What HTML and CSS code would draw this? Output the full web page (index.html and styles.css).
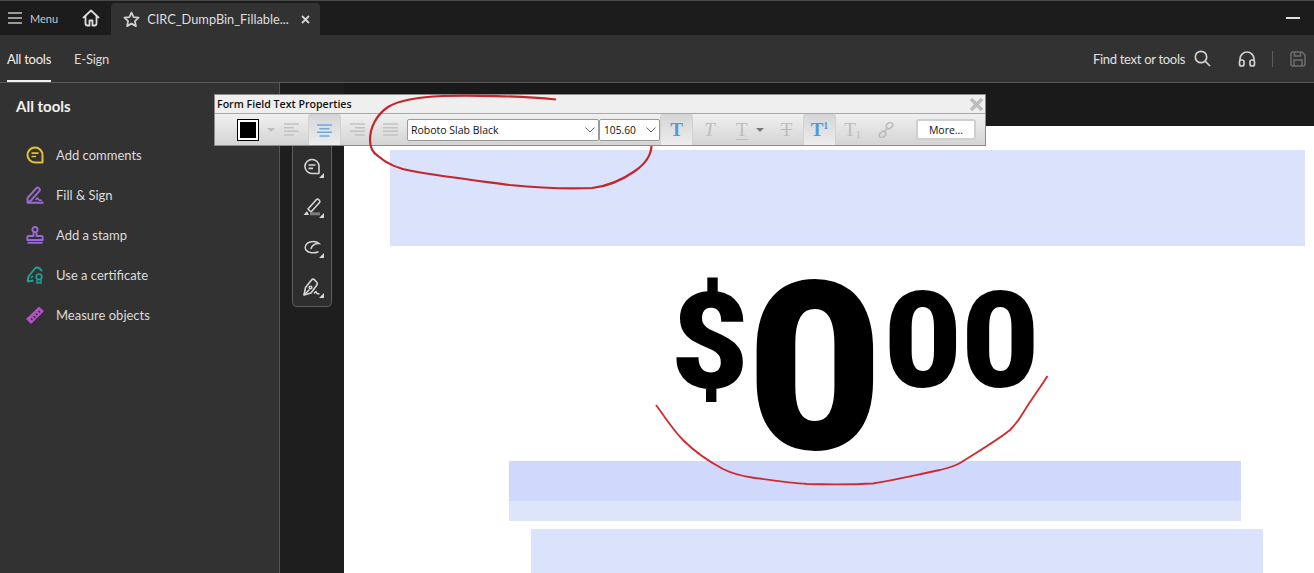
FILE: index.html
```html
<!DOCTYPE html>
<html lang="en">
<head>
  <meta charset="UTF-8">
  <meta name="viewport" content="width=device-width, initial-scale=1.0">
  <title>CIRC_DumpBin_Fillable</title>
  <link rel="stylesheet" href="styles.css">
</head>
<body>
  <div class="app">
    <div class="tabbar">
      <svg class="burger" width="14" height="12" viewBox="0 0 14 12"><path d="M0 1h14M0 6h14M0 11h14" stroke="#c4c4c4" stroke-width="1.5"/></svg>
      <span class="menu-label">Menu</span>
      <svg class="home" width="18" height="18" viewBox="0 0 18 18" fill="none" stroke="#dcdcdc" stroke-width="1.8" stroke-linejoin="round"><path d="M1 9l8-7.500L17 9M3.500 7v7.500a2 2 0 0 0 2 2h2v-5h3v5h2a2 2 0 0 0 2-2V7"/></svg>
      <div class="tab">
        <svg width="17" height="17" viewBox="0 0 17 17" fill="none" stroke="#d0d0d0" stroke-width="1.8" stroke-linejoin="round"><path d="M8.5 1.500l2.100 4.600 5 .6-3.700 3.400 1 5-4.400-2.500-4.400 2.500 1-5L1.400 6.700l5-.6z"/></svg>
        <span class="tab-title">CIRC_DumpBin_Fillable...</span>
        <svg class="tab-close" width="9" height="9" viewBox="0 0 9 9"><path d="M1 1l7 7M8 1l-7 7" stroke="#d4d4d4" stroke-width="1.8"/></svg>
      </div>
      <div class="minimize"></div>
    </div>

    <div class="toolbar">
      <a class="nav-item active">All tools</a>
      <a class="nav-item">E-Sign</a>
      <span class="find">Find text or tools</span>
      <svg class="search" width="17" height="17" viewBox="0 0 17 17" fill="none" stroke="#d0d0d0" stroke-width="1.7"><circle cx="7" cy="7" r="5.700"/><path d="M11 11l5 5"/></svg>
      <svg class="headset" width="18" height="17" viewBox="0 0 18 17" fill="none" stroke="#d0d0d0" stroke-width="1.7"><path d="M2 11V9a7 7 0 0 1 14 0v2"/><rect x="1.500" y="10" width="4.500" height="6" rx="2"/><rect x="12" y="10" width="4.500" height="6" rx="2"/></svg>
      <span class="divider"></span>
      <svg class="save" width="16" height="16" viewBox="0 0 16 16" fill="none" stroke="#6e6e6e" stroke-width="1.500"><path d="M1 3a2 2 0 0 1 2-2h9l3 3v9a2 2 0 0 1-2 2H3a2 2 0 0 1-2-2z"/><path d="M4.500 1v4h6V1M4 15V9h8v6"/></svg>
    </div>

    <div class="workspace">
      <aside class="sidebar">
        <h2>All tools</h2>
        <ul class="tools">
          <li>
            <svg width="18" height="18" viewBox="0 0 18 18" fill="none" stroke="#e2c130" stroke-width="2"><path d="M9 1.500a7.500 7.500 0 0 0 0 15h7.500V9A7.500 7.500 0 0 0 9 1.500z" stroke-linejoin="round"/><path d="M5.500 7.200h7M5.500 10.500h4.500" stroke-width="1.700"/></svg>
            Add comments
          </li>
          <li>
            <svg width="18" height="18" viewBox="0 0 18 18" fill="none" stroke="#9a6ad6" stroke-width="1.900" stroke-linejoin="round"><path d="M1.500 16.500V12L10.500 2a1.500 1.500 0 0 1 2.200 0l.8.800a1.500 1.500 0 0 1 0 2.100L5 14.500l-3.500 2zM1.500 16.800h16"/><path d="M9.500 14l2-2 1.500 2 3 .5" stroke-width="1.500"/></svg>
            Fill &amp; Sign
          </li>
          <li>
            <svg width="18" height="18" viewBox="0 0 18 18" fill="none" stroke="#9a6ad6" stroke-width="1.900" stroke-linejoin="round"><circle cx="9" cy="3.600" r="2.600"/><path d="M7.500 6.500v3.500H2.500a1.200 1.200 0 0 0-1.200 1.200V14h15.400v-2.800a1.200 1.200 0 0 0-1.200-1.200h-5V6.500"/><path d="M1.500 16.800h15"/></svg>
            Add a stamp
          </li>
          <li>
            <svg width="18" height="18" viewBox="0 0 18 18" fill="none" stroke="#23a09c" stroke-width="1.900" stroke-linejoin="round"><path d="M1.500 15.500l1-5L9 2.500c1-1 3-1.200 4.500 0L16 5M1.500 15.500l6-1"/><circle cx="13" cy="10.800" r="2.800" stroke-width="1.700"/><path d="M11 13.500v3.800l2-1 2 1v-3.800" stroke-width="1.400"/><path d="M5 12l2-2" stroke-width="1.500"/></svg>
            Use a certificate
          </li>
          <li>
            <svg width="18" height="18" viewBox="0 0 18 18" fill="#b552c8" stroke="#b552c8" stroke-width="1.400" stroke-linejoin="round"><path d="M1 13L13 1.500l4 3.800L5 17z"/><path d="M5 12.500l1.500 1.500M7.500 10l2 2M10 7.500l1.500 1.500M12.500 5l1.500 1.500" stroke="#323232" stroke-width="1.500"/></svg>
            Measure objects
          </li>
        </ul>
      </aside>

      <div class="rail">
        <div class="rail-pill">
          <div class="rail-btn">
            <svg width="20" height="20" viewBox="0 0 20 20" fill="none" stroke="#d6d6d6" stroke-width="1.600"><path d="M10 2.500a7 7 0 0 0 0 14h6.500c.6 0 .5-.5.5-1V9.500a7 7 0 0 0-7-7z" stroke-linejoin="round"/><path d="M6.500 8h7M6.500 11.300h4.500" stroke-width="1.700"/></svg>
          </div>
          <div class="rail-btn">
            <svg width="20" height="20" viewBox="0 0 20 20" fill="none" stroke="#d6d6d6" stroke-width="1.600" stroke-linejoin="round"><path d="M6 12L14.500 2.500a1.500 1.500 0 0 1 2 0l1 1a1.500 1.500 0 0 1 0 2L9 15z"/><path d="M1.500 18l3.500-4 2 4z" fill="#d6d6d6" stroke="none"/><path d="M8 16.800h10" stroke="#7c7c7c" stroke-width="3"/></svg>
          </div>
          <div class="rail-btn">
            <svg width="20" height="20" viewBox="0 0 20 20" fill="none" stroke="#d6d6d6" stroke-width="1.500" stroke-linecap="round"><path d="M16 15C12 16.500 6 16 4 13C2 10 4 6 8 5C11 4.300 15 4.500 17 6.500C14 6 10 8 9 11.500"/></svg>
          </div>
          <div class="rail-btn">
            <svg width="20" height="20" viewBox="0 0 20 20" fill="none" stroke="#d6d6d6" stroke-width="1.600" stroke-linejoin="round"><path d="M2 18l1.500-7.500L9.500 3c1-1 2.200-1 3.200 0l2 2.200c.8 1 .8 2 0 3L9 16z"/><path d="M2 18l5.500-5.500"/><circle cx="8.500" cy="10.500" r="1.300"/><path d="M12 16.500l2-2 1 2 2.500.5" stroke-width="1.500"/></svg>
          </div>
        </div>
      </div>

      <main class="doc">
        <div class="page">
          <div class="field field-top"></div>
          <div class="price">
            <span class="price-dollar">$</span><span class="price-big">0</span><span class="price-small">00</span>
          </div>
          <div class="field-mid"></div>
          <div class="field field-bottom"></div>
        </div>
      </main>
    </div>

    <div class="props">
      <div class="props-title">
        <span>Form Field Text Properties</span>
        <svg width="15" height="15" viewBox="0 0 15 15"><path d="M2 2l11 11M13 2L2 13" stroke="#bcbcbc" stroke-width="3.600"/></svg>
      </div>
      <div class="props-row">
        <span class="swatch"></span>
        <span class="caret"></span>
        <span class="tb-btn">
          <svg width="15" height="13" viewBox="0 0 15 13" stroke="#c2c2c2" stroke-width="1.600"><path d="M0 1h15M0 4.700h10M0 8.300h15M0 12h10"/></svg>
        </span>
        <span class="tb-btn on">
          <svg width="15" height="13" viewBox="0 0 15 13" stroke="#6fa8e0" stroke-width="1.600"><path d="M0 1h15M2.500 4.700h10M0 8.300h15M2.500 12h10"/></svg>
        </span>
        <span class="tb-btn">
          <svg width="15" height="13" viewBox="0 0 15 13" stroke="#c2c2c2" stroke-width="1.600"><path d="M0 1h15M5 4.700h10M0 8.300h15M5 12h10"/></svg>
        </span>
        <span class="tb-btn">
          <svg width="15" height="13" viewBox="0 0 15 13" stroke="#c2c2c2" stroke-width="1.600"><path d="M0 1h15M0 4.700h15M0 8.300h15M0 12h15"/></svg>
        </span>
        <div class="select select-font">Roboto Slab Black
          <svg width="10" height="6" viewBox="0 0 10 6" fill="none" stroke="#666"><path d="M.5.500L5 5 9.500.500"/></svg>
        </div>
        <div class="select select-size">105.60
          <svg width="10" height="6" viewBox="0 0 10 6" fill="none" stroke="#666"><path d="M.5.500L5 5 9.500.500"/></svg>
        </div>
        <span class="tb-btn on glyph">T</span>
        <span class="tb-btn glyph italic">T</span>
        <span class="tb-btn glyph under"><span class="under-t">T</span><span class="caret caret-dark"></span></span>
        <span class="tb-btn glyph strike">T</span>
        <span class="tb-btn on glyph">T<small>1</small></span>
        <span class="tb-btn glyph sub">T<small>1</small></span>
        <span class="tb-btn">
          <svg width="16" height="16" viewBox="0 0 16 16" fill="none" stroke="#bdbdbd" stroke-width="1.800"><rect x="8" y="1" width="7" height="5" rx="2.500" transform="rotate(-45 11.500 3.500)"/><rect x="1" y="10" width="7" height="5" rx="2.500" transform="rotate(-45 4.500 12.500)"/><path d="M6 10l4-4"/></svg>
        </span>
        <button class="more">More...</button>
      </div>
    </div>

    <svg class="ink" width="1314" height="573" viewBox="0 0 1314 573" fill="none">
      <path class="ink-thick" d="M556 99.500C520 96 470 95 443 96C415 97 398 101 388 107C376 115 370 128 370 140C370 148 373 153 378 156C388 165 400 169 412 171C445 177 480 181 510 185C540 188 570 189 592 188C610 186 625 178 635 171C645 164 651 155 651.500 146"/>
      <path class="ink-thin" d="M656 405C665 417 673 430 683 440C695 452 708 461 723 469C733 474 742 476 752 477.500C770 480 790 483 807 484C830 484.500 855 484.500 873 483.500C895 480 915 475 940 470C948 468 955 466 960 463C977 452 995 442 1010 430C1016 424 1020 418 1023 413C1030 401 1040 388 1047.500 376"/>
    </svg>
  </div>
</body>
</html>
```

FILE: styles.css
```css
* {
  box-sizing: border-box;
}
html, body {
  margin: 0;
  padding: 0;
  height: 100%;
  overflow: hidden;
}
body {
  font-family: 'Lato', sans-serif;
  color: #e6e6e6;
  background-color: #1c1c1c;
}
.app {
  position: relative;
  width: 1314px;
  height: 573px;
  display: flex;
  flex-direction: column;
  overflow: hidden;
}

/* top tab strip */
.tabbar {
  height: 35px;
  flex: none;
  display: flex;
  align-items: center;
  background-color: #1c1c1c;
  border-top: 1px solid #4a4a4a;
}
.burger {
  margin-left: 8px;
}
.menu-label {
  margin-left: 8px;
  font-size: 11px;
  color: #c8c8c8;
}
.home {
  margin-left: 24px;
}
.tab {
  margin-left: 11px;
  width: 209px;
  height: 32px;
  align-self: flex-end;
  display: flex;
  align-items: center;
  padding-left: 12px;
  background-color: #323232;
  border-radius: 4px 4px 0 0;
}
.tab-title {
  margin-left: 7px;
  font-size: 12.800px;
  color: #dedede;
  white-space: nowrap;
}
.tab-close {
  margin-left: 12px;
}
.minimize {
  margin-left: auto;
  margin-right: 14px;
  width: 14px;
  height: 2px;
  background-color: #e0e0e0;
}

/* second row */
.toolbar {
  height: 48px;
  flex: none;
  display: flex;
  align-items: center;
  padding: 0 8px 0 7px;
  background-color: #323232;
  border-bottom: 1px solid #5a5a5a;
}
.nav-item {
  height: 47px;
  line-height: 48px;
  margin-right: 23px;
  font-size: 13px;
  letter-spacing: -0.25px;
  color: #d8d8d8;
}
.nav-item.active {
  color: #f0f0f0;
  border-bottom: 2px solid #f0f0f0;
}
.find {
  margin-left: auto;
  font-size: 13px;
  letter-spacing: -0.3px;
  color: #e0e0e0;
}
.search {
  margin-left: 9px;
}
.headset {
  margin-left: 27px;
}
.divider {
  width: 1px;
  height: 16px;
  margin-left: 16px;
  background-color: #5c5c5c;
}
.save {
  margin-left: 17px;
}

/* main area */
.workspace {
  flex: 1;
  display: flex;
  min-height: 0;
}
.sidebar {
  width: 280px;
  flex: none;
  padding: 14px 0 0 16px;
  background-color: #323232;
  border-right: 1px solid #555;
}
.sidebar h2 {
  margin: 0 0 20px;
  font-size: 15px;
  line-height: 18px;
  font-weight: 700;
  color: #f2f2f2;
}
.tools {
  list-style: none;
  margin: 0;
  padding: 0 0 0 10px;
}
.tools li {
  height: 40px;
  display: flex;
  align-items: center;
  gap: 12px;
  font-size: 13px;
  color: #dcdcdc;
}
.rail {
  width: 64px;
  flex: none;
  padding-left: 12px;
  background-color: #1e1e1e;
}
.rail-pill {
  width: 40px;
  margin-top: 43px;
  height: 181px;
  padding-top: 27px;
  background-color: #2e2e2e;
  border: 1px solid #5e5e5e;
  border-top: none;
  border-radius: 0 0 5px 5px;
}
.rail-btn {
  position: relative;
  height: 40px;
  display: flex;
  justify-content: center;
  align-items: flex-start;
  padding-top: 4px;
}
.rail-btn::after {
  content: "";
  position: absolute;
  right: 7px;
  top: 20px;
  border-style: solid;
  border-width: 0 0 5px 5px;
  border-color: transparent transparent #d8d8d8 transparent;
}
.doc {
  flex: 1;
  min-width: 0;
  padding-top: 43px;
  background-color: #1a1a1a;
}
.page {
  height: 100%;
  padding-top: 24px;
  background-color: #fff;
  color: #000;
}
.field {
  background-color: #dbe2fc;
}
.field-top {
  width: 915px;
  height: 96px;
  margin-left: 46px;
}
.price {
  height: 215px;
  display: flex;
  align-items: flex-start;
  padding: 0 0 0 327px;
  font-family: 'Roboto', sans-serif;
  font-weight: 900;
  line-height: 1;
}
.price-dollar {
  font-size: 134px;
  margin-top: 30px;
}
.price-small {
  font-size: 134px;
  margin: 29px 0 0 1px;
}
.price-big {
  font-size: 235px;
  margin: 5px 0 0 -2px;
}
.field-mid {
  width: 732px;
  height: 60px;
  margin-left: 165px;
  background: linear-gradient(#d0d9fb 0, #d0d9fb 40px, #dde4fc 40px);
}
.field-bottom {
  width: 732px;
  height: 60px;
  margin: 8px 0 0 187px;
}

/* floating properties palette */
.props {
  position: absolute;
  left: 214px;
  top: 94px;
  width: 772px;
  height: 52px;
  font-family: 'Open Sans', sans-serif;
  color: #111;
  background-color: #ececec;
  border: 1px solid #8c8c8c;
}
.props-title {
  height: 19px;
  display: flex;
  justify-content: space-between;
  align-items: center;
  padding: 0 1px 0 2px;
  font-size: 10.600px;
  font-weight: 600;
  background-color: #efefef;
  border-bottom: 1px solid #a8a8a8;
}
.props-row {
  height: 31px;
  display: flex;
  align-items: center;
  padding-left: 22px;
  background: linear-gradient(#f0f0f0, #d4d4d4);
}
.swatch {
  width: 22px;
  height: 22px;
  background-color: #000;
  border: 1px solid #000;
  box-shadow: inset 0 0 0 2px #fff;
}
.caret {
  width: 0;
  height: 0;
  margin-left: 8px;
  border-style: solid;
  border-width: 4px 4px 0;
  border-color: #bdbdbd transparent transparent;
}
.caret-dark {
  margin-left: 8px;
  border-top-color: #777;
}
.tb-btn {
  width: 33px;
  height: 31px;
  flex: none;
  display: flex;
  align-items: center;
  justify-content: center;
  border-radius: 3px 3px 0 0;
}
.tb-btn.on {
  background: linear-gradient(#d6d6d6, #ececec);
  border: 1px solid #d2d2d2;
  border-bottom: none;
}
.glyph {
  font-family: 'Liberation Serif', serif;
  font-size: 19px;
  color: #bcbcbc;
}
.glyph.on {
  color: #4f9be0;
  font-weight: 700;
}
.glyph small {
  font-size: 10px;
  margin-top: -9px;
}
.glyph.sub small {
  margin-top: 9px;
}
.italic {
  font-style: italic;
}
.under {
  width: 43px;
  justify-content: flex-start;
  padding-left: 10px;
}
.under-t {
  text-decoration: underline;
  text-underline-offset: 3px;
}
.strike {
  margin-left: 1px;
  text-decoration: line-through;
}
.select {
  height: 22px;
  display: flex;
  align-items: center;
  justify-content: space-between;
  padding: 1px 3px 0 3px;
  font-size: 10.500px;
  background-color: #fff;
  border: 1px solid #9a9a9a;
  border-radius: 2px;
}
.select-font {
  width: 192px;
}
.select-size {
  width: 61px;
  margin-left: 0;
  padding-left: 4px;
  font-size: 10.200px;
}
.more {
  width: 60px;
  height: 21px;
  margin-left: 14px;
  padding: 0;
  font-family: inherit;
  font-size: 10.500px;
  color: #111;
  background-color: #fff;
  border: 2px solid #cfcfcf;
  border-radius: 3px;
}

/* red marker drawn over the screenshot */
.ink {
  position: absolute;
  left: 0;
  top: 0;
  pointer-events: none;
}
.ink-thick {
  stroke: #c4262e;
  stroke-width: 2.200;
}
.ink-thin {
  stroke: #cf2a30;
  stroke-width: 1.800;
}
```
